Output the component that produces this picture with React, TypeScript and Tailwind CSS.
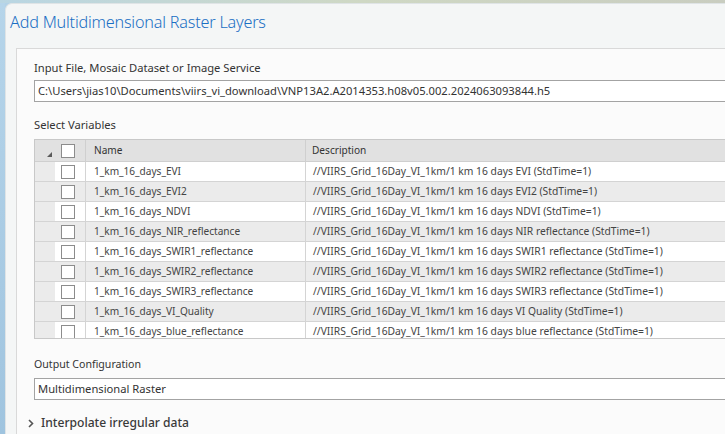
import React from 'react';

const rows = [
  ['1_km_16_days_EVI', 'EVI'],
  ['1_km_16_days_EVI2', 'EVI2'],
  ['1_km_16_days_NDVI', 'NDVI'],
  ['1_km_16_days_NIR_reflectance', 'NIR reflectance'],
  ['1_km_16_days_SWIR1_reflectance', 'SWIR1 reflectance'],
  ['1_km_16_days_SWIR2_reflectance', 'SWIR2 reflectance'],
  ['1_km_16_days_SWIR3_reflectance', 'SWIR3 reflectance'],
  ['1_km_16_days_VI_Quality', 'VI Quality'],
  ['1_km_16_days_blue_reflectance', 'blue reflectance'],
];

const Checkbox = () => <div className="w-[14px] h-[14px] bg-white border border-[#8c8c8c]" />;

const App: React.FC = () => {
  return (
    <div
      className="w-[725px] h-[434px] overflow-hidden flex flex-col bg-[#b3d2e7] text-[11.2px] text-[#333]"
      style={{ fontFamily: '"Noto Sans", "Open Sans", sans-serif' }}
    >
      {/* map peeking above the dialog */}
      <div className="h-[3px] shrink-0 bg-gradient-to-r from-[#b9d6e3] via-[#cfd8c4] to-[#c9cdc0]" />

      <div className="flex flex-1 min-h-0">
        <div className="w-[5px] shrink-0 bg-gradient-to-b from-[#b6d5ea] to-[#9fc4df]" />

        {/* dialog */}
        <div className="flex-1 flex flex-col rounded-tl-[7px] bg-[#f4f6f6] border-l border-t border-[#dfe4e6] min-w-0">
          <div className="h-[44px] shrink-0 pl-[4px] pt-[6px] text-[16.2px] leading-[24px] text-[#1a6fc4] font-light tracking-[-0.2px]">
            Add Multidimensional Raster Layers
          </div>

          {/* content pane */}
          <div className="flex-1 ml-[10px] border-l border-t border-[#d9d9d9] bg-[#fbfbfb] pl-[17px] pt-[11px] min-w-0">
            <div className="leading-[16px]">Input File, Mosaic Dataset or Image Service</div>
            <div className="mt-[4px] h-[22px] border border-[#a3a3a3] bg-white flex items-center pl-[3px] whitespace-nowrap overflow-hidden -mr-[20px]">
              C:\Users\jias10\Documents\viirs_vi_download\VNP13A2.A2014353.h08v05.002.2024063093844.h5
            </div>

            <div className="mt-[15px] leading-[16px]">Select Variables</div>

            {/* variables grid */}
            <div className="mt-[6px] h-[200px] overflow-hidden border-t border-l border-b border-[#c8c8c8] -mr-[20px] text-[10.1px] text-[#444]">
              <div className="grid grid-cols-[20px_30px_220px_1fr] h-[22px] bg-[#e1e1e1] border-b border-[#cfcfcf]">
                <div className="flex items-end justify-end pb-[4px] pr-[3px]">
                  <svg width="5" height="5" viewBox="0 0 5 5">
                    <polygon points="5,0 5,5 0,5" fill="#5a5a5a" />
                  </svg>
                </div>
                <div className="flex items-center pl-[6px]">
                  <Checkbox />
                </div>
                <div className="flex items-center pl-[8px] border-l border-[#cfcfcf] text-[#333]">Name</div>
                <div className="flex items-center pl-[6px] border-l border-[#cfcfcf] text-[#333]">Description</div>
              </div>
              {rows.map(([name, desc], i) => (
                <div
                  key={name}
                  className={
                    'grid grid-cols-[20px_30px_220px_1fr] h-[20px] border-b border-[#d4d4d4] ' +
                    (i % 2 === 1 ? 'bg-[#ebebeb]' : 'bg-white')
                  }
                >
                  <div className="bg-[#ebebeb]" />
                  <div className="flex items-center pl-[6px]">
                    <Checkbox />
                  </div>
                  <div className="flex items-center pl-[8px] border-l border-[#d4d4d4] whitespace-nowrap">
                    {name}
                  </div>
                  <div className="flex items-center pl-[7px] border-l border-[#d4d4d4] whitespace-nowrap overflow-hidden text-[10.3px]">
                    //VIIRS_Grid_16Day_VI_1km/1 km 16 days {desc} (StdTime=1)
                  </div>
                </div>
              ))}
            </div>

            <div className="mt-[17px] leading-[16px] text-[10.6px]">Output Configuration</div>
            <div className="mt-[6px] h-[22px] border border-[#a3a3a3] bg-white flex items-center pl-[3px] -mr-[20px]">
              Multidimensional Raster
            </div>

            <div className="mt-[14px] -ml-[6px] flex items-center gap-[7px] text-[12.1px] text-[#3a3a3a] font-medium">
              <svg width="6" height="9" viewBox="0 0 6 9">
                <polyline points="1,1 4.5,4.5 1,8" fill="none" stroke="#555" strokeWidth="1.6" />
              </svg>
              Interpolate irregular data
            </div>
          </div>
        </div>
      </div>
    </div>
  );
};

export default App;
